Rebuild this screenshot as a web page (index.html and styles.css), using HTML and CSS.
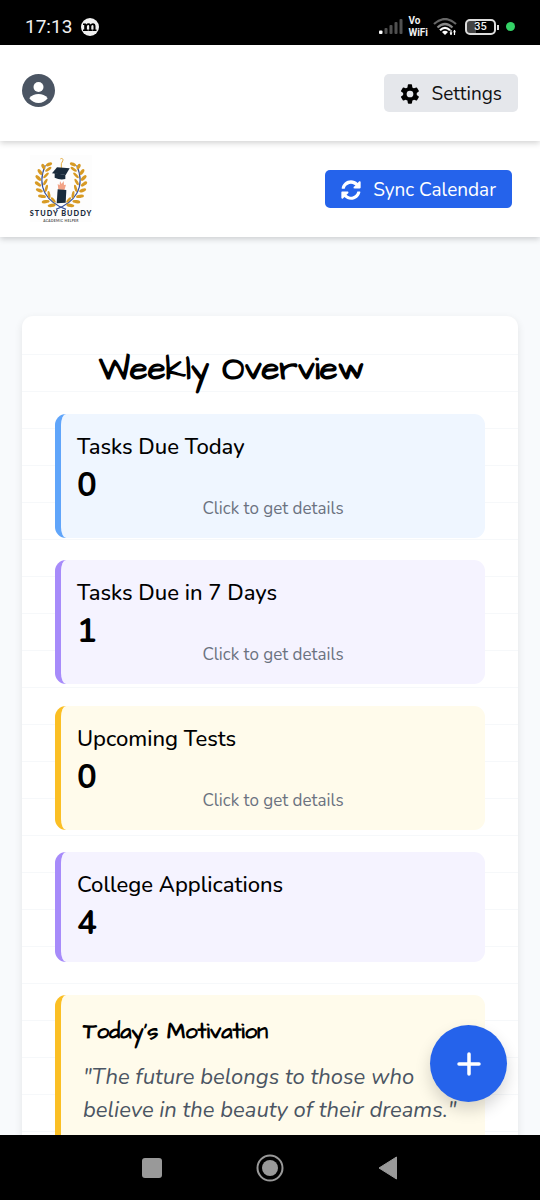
FILE: index.html
```html
<!DOCTYPE html>
<html lang="en">
<head>
<meta charset="utf-8">
<meta name="viewport" content="width=device-width, initial-scale=1">
<title>Study Buddy</title>
<link rel="stylesheet" href="styles.css">
</head>
<body>
<div class="screen">
  <div class="status">
    <div class="status-group">
      <span class="clock">17:13</span>
      <svg width="18" height="18" viewBox="0 0 18 18"><circle cx="9" cy="9" r="9" fill="#f1f1f1"/><path d="M2 5.500h3v1q1-1.200 2.600-1.200 1.500 0 2 1.300 1-1.300 2.600-1.300 2.300 0 2.300 2.500v3.800h1V13h-4v-1.400h1V8.200q0-1.300-1-1.300-1.200 0-1.200 1.500v3.200h.9V13H7.300v-1.400h.9V8.200q0-1.300-1-1.300-1.300 0-1.300 1.500v3.200h1V13H2v-1.400h1.200V6.900H2z" fill="#000"/></svg>
    </div>
    <div class="status-group right">
      <svg width="24" height="17" viewBox="0 0 24 17"><rect x="0" y="12.500" width="3.500" height="3.500" rx="1" fill="#fff"/><g fill="#505050"><rect x="5.500" y="10" width="3" height="6" rx="1"/><rect x="10.500" y="7" width="3" height="9" rx="1"/><rect x="15.500" y="4" width="3" height="12" rx="1"/><rect x="20.500" y="1" width="3" height="15" rx="1"/></g></svg>
      <span class="vowifi"><span>Vo</span><span>WiFi</span></span>
      <svg width="24" height="18" viewBox="0 0 24 18" fill="none" stroke-width="2.200"><path d="M1 6Q12-4 23 6" stroke="#666"/><path d="M4.500 9.500Q12 2.500 19.500 9.500" stroke="#888"/><path d="M7 12.200Q12 7.500 17 12.200" stroke="#fff"/><path d="M9 14q3-2.500 6 0l-3 3z" fill="#fff"/><path d="M18 12v5M21.500 12v5" stroke="#fff" stroke-width="1.200"/><path d="M16.500 14.500h3L18 17zM20 14.300h3l-1.500-2.500z" fill="#fff"/></svg>
      <span class="battery">35</span>
      <span class="dot"></span>
    </div>
  </div>

  <div class="app">
    <header class="bar bar-top">
      <a class="profile" href="#" aria-label="Profile">
        <svg width="33" height="33" viewBox="0 0 33 33"><circle cx="16.500" cy="16.500" r="16.500" fill="#4b5563"/><circle cx="16.500" cy="13" r="5" fill="#fff"/><path d="M7.300 24.300C9.500 21.300 13 20 16.500 20s7 1.300 9.200 4.300C23.500 27.300 20 29 16.500 29s-7-1.700-9.200-4.700z" fill="#fff"/></svg>
      </a>
      <button class="btn btn-gray" type="button">
        <svg width="20" height="20" viewBox="1 1 22 22" fill="#000"><path d="M19.400 13a7.700 7.700 0 0 0 0-2l2.200-1.700a.7.700 0 0 0 .1-.8l-2-3.500a.7.700 0 0 0-.8-.2l-2.500 1a7 7 0 0 0-1.800-1L14.200 2a.7.700 0 0 0-.7-.6h-3.200a.7.700 0 0 0-.7.600l-.4 2.800a7 7 0 0 0-1.800 1l-2.500-1a.7.700 0 0 0-.8.200l-2 3.500a.7.700 0 0 0 .1.800L4.500 11a7.700 7.700 0 0 0 0 2l-2.300 1.700a.7.700 0 0 0-.1.800l2 3.500c.2.300.5.300.8.200l2.500-1a7 7 0 0 0 1.800 1l.4 2.800c0 .3.300.6.700.6h3.200c.4 0 .7-.3.700-.6l.4-2.800a7 7 0 0 0 1.800-1l2.500 1c.3.100.6.100.8-.2l2-3.500a.7.700 0 0 0-.1-.8zM12 15.700a3.700 3.700 0 1 1 0-7.400 3.700 3.700 0 0 1 0 7.400z"/></svg>
        Settings
      </button>
    </header>

    <nav class="bar bar-brand">
      <a class="logo" href="#" aria-label="Study Buddy">
        <svg width="66" height="70" viewBox="54 42 198 210">
          <rect x="60" y="45" width="186" height="200" fill="#fdfdfd"/>
          <defs>
            <g id="branch">
              <path d="M168 208C115 188 76 145 106 76" fill="none" stroke="#38529b" stroke-width="3.500"/>
              <g fill="#d79a24">
                <ellipse cx="117" cy="73" rx="10" ry="5" transform="rotate(-25 117 73)"/>
                <ellipse cx="100" cy="80" rx="9" ry="5" transform="rotate(65 100 80)"/>
                <ellipse cx="115" cy="88" rx="11" ry="4" transform="rotate(-35 115 88)"/>
                <ellipse cx="90" cy="96" rx="10" ry="5" transform="rotate(55 90 96)"/>
                <ellipse cx="108" cy="106" rx="11" ry="4" transform="rotate(-45 108 106)"/>
                <ellipse cx="85" cy="114" rx="11" ry="5" transform="rotate(45 85 114)"/>
                <ellipse cx="106" cy="126" rx="11" ry="4" transform="rotate(-60 106 126)"/>
                <ellipse cx="84" cy="132" rx="11" ry="5" transform="rotate(35 84 132)"/>
                <ellipse cx="109" cy="145" rx="11" ry="4" transform="rotate(-75 109 145)"/>
                <ellipse cx="88" cy="151" rx="11" ry="5" transform="rotate(22 88 151)"/>
                <ellipse cx="117" cy="164" rx="11" ry="4" transform="rotate(-100 117 164)"/>
                <ellipse cx="96" cy="169" rx="12" ry="5" transform="rotate(8 96 169)"/>
                <ellipse cx="130" cy="180" rx="10" ry="4" transform="rotate(50 130 180)"/>
                <ellipse cx="107" cy="185" rx="12" ry="5" transform="rotate(-8 107 185)"/>
                <ellipse cx="125" cy="196" rx="12" ry="5" transform="rotate(-10 125 196)"/>
              </g>
            </g>
          </defs>
          <use href="#branch"/>
          <use href="#branch" transform="matrix(-1 0 0 1 306 0)"/>
          <path d="M151 57c5-4 10 0 7 6l-4 8v14" fill="none" stroke="#e3aa3c" stroke-width="3"/>
          <path d="M141 82l38 3-12 20-41-5z" fill="#1a2b3c"/>
          <path d="M134 99l32 6v12q-16 4-32-4z" fill="#1a2b3c"/>
          <path d="M145 148l-2-16 6 4 1-13 5 9 6-9 1 12 6-1-5 17z" fill="#f2a386"/>
          <path d="M143 148l26 2-2 38-27 2z" fill="#1a2b3c"/>
          <text class="logo-name" x="153" y="229" text-anchor="middle">STUDY BUDDY</text>
          <text class="logo-sub" x="153" y="245" text-anchor="middle">ACADEMIC HELPER</text>
        </svg>
      </a>
      <button class="btn btn-blue" type="button">
        <svg width="20" height="20" viewBox="0 0 512 512" fill="#fff"><path d="M371 142a164 164 0 0 0-274 74c-1 5-6 9-11 9H28c-7 0-13-7-12-14C37 96 136 8 256 8c66 0 125 26 170 68l35-35c16-15 42-4 42 17v134c0 13-11 24-24 24H345c-22 0-32-26-17-41zM33 296h134c22 0 32 26 17 41l-43 43a164 164 0 0 0 274-74c1-5 6-9 11-9h58c7 0 13 7 12 14-21 115-120 193-240 193-66 0-125-26-170-68l-35 35c-16 15-42 4-42-17V320c0-13 11-24 24-24z"/></svg>
        Sync Calendar
      </button>
    </nav>

    <main class="content">
      <section class="paper">
        <h1 class="title">Weekly Overview</h1>
        <div class="tiles">
          <a class="tile blue" href="#"><h2>Tasks Due Today</h2><strong>0</strong><span class="hint">Click to get details</span></a>
          <a class="tile purple" href="#"><h2>Tasks Due in 7 Days</h2><strong>1</strong><span class="hint">Click to get details</span></a>
          <a class="tile yellow" href="#"><h2>Upcoming Tests</h2><strong>0</strong><span class="hint">Click to get details</span></a>
          <div class="tile purple"><h2>College Applications</h2><strong>4</strong></div>
        </div>
        <div class="tile yellow quote">
          <h3>Today's Motivation</h3>
          <p>"The future belongs to those who believe in the beauty of their dreams."</p>
        </div>
      </section>
    </main>
  </div>

  <button class="fab" type="button" aria-label="Add task">
    <svg width="24" height="24" viewBox="0 0 24 24"><path d="M12 2v20M2 12h20" stroke="#fff" stroke-width="3.500" stroke-linecap="round"/></svg>
  </button>

  <div class="keys">
    <button type="button" aria-label="Recent apps"><svg width="28" height="28" viewBox="0 0 28 28"><rect x="4" y="4" width="20" height="20" rx="3" fill="#999"/></svg></button>
    <button type="button" aria-label="Home"><svg width="28" height="28" viewBox="0 0 28 28"><circle cx="14" cy="14" r="12.500" fill="none" stroke="#999" stroke-width="2"/><circle cx="14" cy="14" r="8" fill="#999"/></svg></button>
    <button type="button" aria-label="Back"><svg width="28" height="28" viewBox="0 0 28 28"><path d="M5 14L22.500 3v22z" fill="#999" stroke="#999" stroke-linejoin="round"/></svg></button>
  </div>
</div>
</body>
</html>
```
FILE: styles.css
```css
* { box-sizing: border-box; }
body { margin: 0; font-family: Nunito, "Noto Sans", sans-serif; color: #000; background: #f8fafc; }
h1, h2, h3, p { margin: 0; }
button { font: inherit; border: 0; padding: 0; cursor: pointer; }
a { color: inherit; text-decoration: none; }
svg { display: block; flex: none; }

.screen { position: relative; display: flex; flex-direction: column; height: 100vh; }

.status { display: flex; justify-content: space-between; align-items: center; padding: 8px 25px 0; height: 45px; flex: none; background: #000; color: #f1f1f1; font-family: Roboto, sans-serif; }
.status-group { display: flex; align-items: center; gap: 9px; }
.status-group.right { gap: 5px; }
.clock { font-size: 19px; }
.vowifi { display: flex; flex-direction: column; font-size: 10px; line-height: 12px; font-weight: 700; }
.battery { position: relative; width: 31px; height: 16px; margin: 0 5px 0 3px; border: 2px solid #ddd; border-radius: 5px; background: linear-gradient(90deg, #444 35%, #000 35%); font-size: 11px; line-height: 12px; text-align: center; font-weight: 500; }
.battery::after { content: ""; position: absolute; right: -5px; top: 4px; width: 2px; height: 5px; background: #ddd; }
.dot { width: 9px; height: 9px; border-radius: 50%; background: #34d266; }

.app { flex: 1; min-height: 0; overflow-y: auto; scrollbar-width: none; }

.bar { position: relative; display: flex; justify-content: space-between; align-items: center; height: 96px; background: #fff; box-shadow: 0 2px 6px rgba(0, 0, 0, .18); }
.bar-top { z-index: 1; padding: 0 22px; }
.bar-brand { padding: 0 28px; }
.profile { padding-bottom: 6px; }
.btn { display: flex; align-items: center; gap: 12px; height: 38px; padding: 1px 16px 0; border-radius: 5px; font-size: 19px; line-height: 24px; }
.btn-gray { background: #e5e7eb; color: #111; }
.btn-blue { background: #2563eb; color: #fff; }
.logo-name { font: 900 22px Lato, sans-serif; letter-spacing: 3px; fill: #1a2b3c; }
.logo-sub { font: 700 10px Lato, sans-serif; letter-spacing: 1px; fill: #555; }

.content { padding: 79px 22px 22px; }
.paper { padding: 33px; border-radius: 11px; background: #fff repeating-linear-gradient(transparent 0 36px, #f6f8fa 36px 37px) 0 2px; box-shadow: 0 3px 8px rgba(0, 0, 0, .09); }
.title { padding-right: 77px; margin-bottom: 24px; font-family: "Architects Daughter", Lato, sans-serif; font-size: 33px; line-height: 41px; font-weight: 700; text-align: center; }
.tiles { display: grid; gap: 22px; margin-bottom: 33px; }
.tile { display: block; padding: 17px 16px 16px; border-left: 6px solid; border-radius: 11px; }
.blue { background: #eff6ff; border-color: #60a5fa; }
.purple { background: #f5f3ff; border-color: #a78bfa; }
.yellow { background: #fffbeb; border-color: #fbbf24; }
.tile h2 { font-size: 22px; line-height: 33px; font-weight: 500; }
.tile strong { display: block; font-size: 33px; line-height: 44px; font-weight: 700; }
.tile .hint { display: block; margin: -10px 0 2px; font-size: 17px; line-height: 22px; color: #6b7280; text-align: center; }
.quote { padding: 22px; }
.quote h3 { margin-bottom: 14px; font-family: "Architects Daughter", Lato, sans-serif; font-size: 22px; line-height: 30px; font-weight: 700; }
.quote p { font-size: 22px; line-height: 33px; font-style: italic; color: #4b5563; }

.fab { position: absolute; right: 33px; bottom: 98px; display: grid; place-items: center; width: 77px; height: 77px; border-radius: 50%; background: #2563eb; box-shadow: 0 8px 16px rgba(0, 0, 0, .16); }

.keys { flex: none; display: flex; justify-content: center; align-items: center; gap: 90px; height: 65px; background: #000; }
.keys button { background: none; }
```
